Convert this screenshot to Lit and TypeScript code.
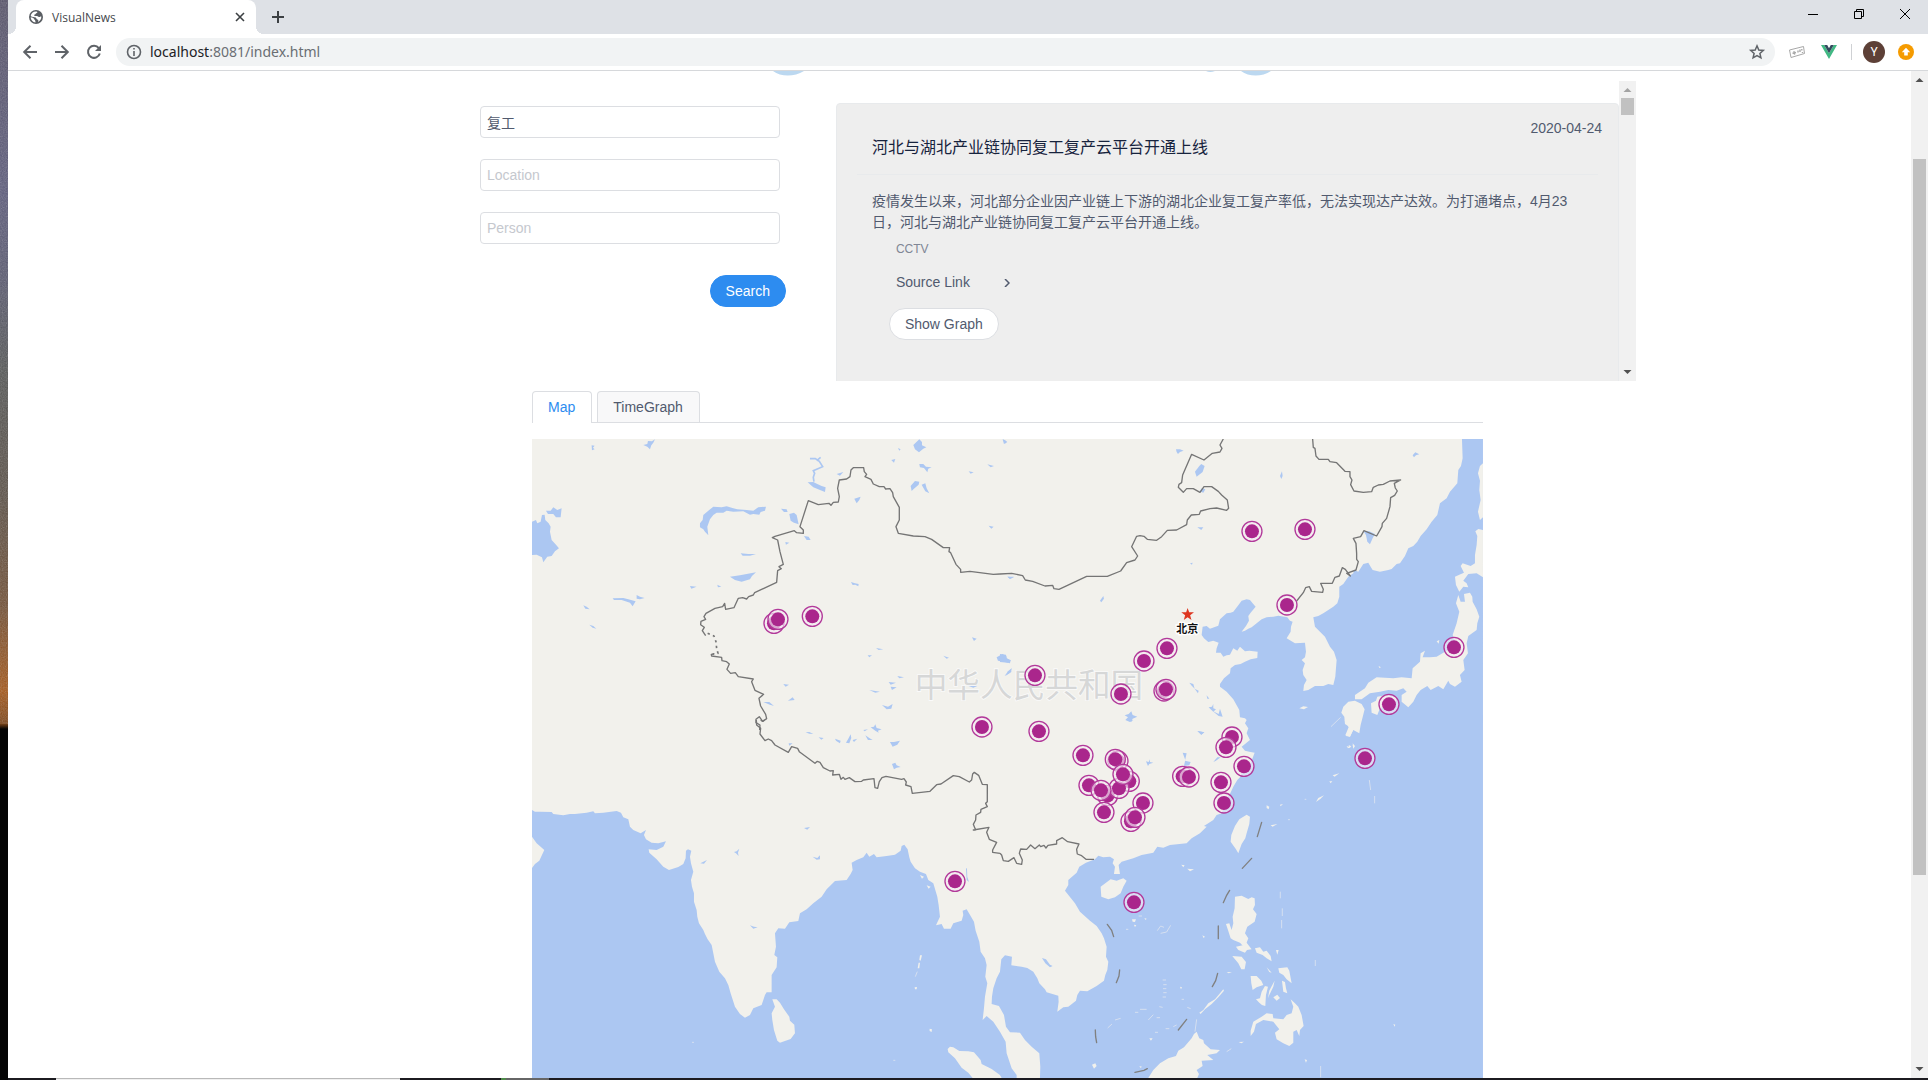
import { LitElement, html, svg, css } from "lit";
import { customElement, property, state } from "lit/decorators.js";

type Point = [number, number];

/* Map drawing units: three per pixel, origin at the top left of the map.
   The drawing is made of four sheets, each with its own origin. */
const SHEETS = {
  nw: { origin: [-36, -177] as Point },
  ne: { origin: [1404, -27] as Point },
  sw: { origin: [-36, 843] as Point },
  se: { origin: [1404, 843] as Point },
};
type SheetName = keyof typeof SHEETS;

const SEA: Record<SheetName, string[]> = {
  nw: [
    "M36,425 48,420 52,430 62,425 66,405 74,404 76,420 86,430 92,440 90,455 95,480 106,492 117,505 105,514 95,528 82,530 70,547 66,532 50,524 36,525Z",
    "M78,392 92,392 100,382 112,390 125,385 122,412 108,412 100,402 84,402Z",
    "M540,430 548,420 550,405 565,392 580,380 605,382 620,379 640,385 652,388 680,390 700,392 715,382 738,380 735,392 722,396 718,404 700,402 690,404 670,394 640,395 620,392 610,398 590,398 580,405 570,418 562,440 565,466 555,455 550,448 540,442Z",
    "M783,386 800,388 803,396 792,396Z",
    "M808,402 822,398 830,405 836,433 822,428 812,422Z",
    "M863,307 880,306 892,312 905,318 917,322 915,336 900,330 880,322Z",
    "M1180,195 1198,178 1206,186 1206,196 1219,202 1210,206 1197,217 1185,208Z",
    "M1198,252 1210,252 1218,260 1235,262 1225,266 1222,277 1212,264 1200,262Z",
    "M1172,318 1185,303 1198,305 1196,314 1182,326 1175,333Z",
    "M1205,314 1216,310 1220,325 1228,340 1216,334Z",
    "M370,195 382,192 384,183 396,184 405,178 400,188 394,196 390,208 382,200Z",
    "M630,590 660,586 680,582 708,577 696,588 690,598 665,605 645,600Z",
    "M662,520 685,522 708,522 690,527 668,527Z",
    "M278,655 310,654 325,658 347,664 338,679 330,668 305,660 282,660Z",
    "M350,645 360,650 374,654 360,658 350,656Z",
    "M1003,356 1022,350 1018,360 1010,370Z",
    "M993,606 1005,610 1016,612 1015,619 1006,614 998,615Z",
    "M190,676 200,680 209,688 196,686Z",
    "M208,734 220,738 229,746 218,743Z",
    "M1430,832 1448,822 1460,830 1458,836 1472,840 1470,850 1452,845 1434,842Z",
    "M1474,866 1474,876 1456,888 1466,876Z",
    "M1086,975 1104,980 1118,972 1114,986 1100,988Z",
    "M510,618 530,620 514,626Z",
    "M592,614 604,620 594,622Z",
    "M852,468 866,470 872,480 860,480Z",
    "M796,486 808,488 798,494Z",
    "M1406,437 1421,440 1414,446Z",
    "M1463,590 1482,592 1470,597Z",
    "M950,282 970,276 960,287Z",
    "M1450,178 1462,186 1454,192Z",
    "M1402,253 1422,258 1412,262Z",
    "M1346,274 1361,277 1352,281Z",
    "M1114,240 1126,237 1122,248Z",
    "M1134,204 1142,208 1138,212Z",
    "M215,196 224,197 219,203 224,208 216,211Z",
    "M1356,772 1370,776 1362,783Z",
    "M1068,804 1090,808 1076,810Z",
    "M1270,827 1287,833 1280,836Z",
    "M1043,826 1056,826 1048,832Z",
    "M1106,906 1128,908 1112,914Z",
    "M1112,920 1130,922 1116,930Z",
    "M1132,888 1152,892 1138,895Z",
    "M1048,930 1080,935 1066,938Z",
    "M730,966 748,966 762,978 746,973Z",
    "M804,962 818,952 824,960Z",
    "M790,912 807,914 797,920Z",
    "M1340,916 1372,918 1360,923Z",
  ],
  ne: [
    "M750,880 735,865 720,862 718,840 708,822 700,808 680,785 660,770 660,762 672,745 690,730 692,715 705,705 722,702 735,695 752,688 772,684 773,665 748,662 735,664 720,650 712,662 700,655 690,674 680,676 670,680 662,668 648,668 650,655 656,638 640,632 625,636 612,625 605,615 608,590 620,588 630,596 655,587 660,568 680,550 692,548 700,545 715,526 725,512 740,508 750,510 758,520 767,530 752,548 745,558 747,572 738,588 725,605 735,602 745,596 755,592 770,580 785,568 800,562 820,560 835,557 862,562 870,572 878,575 873,590 872,605 860,625 885,640 915,638 918,665 915,682 905,690 915,700 908,720 910,735 920,750 912,765 910,783 925,780 945,768 970,768 985,762 1000,765 1006,740 1010,690 1002,665 990,650 975,620 960,605 945,590 940,562 955,558 970,550 1000,530 1012,520 1018,500 1018,470 1030,462 1045,440 1060,430 1062,420 1075,425 1090,402 1105,398 1112,410 1118,420 1140,425 1165,420 1175,417 1190,402 1200,400 1215,378 1225,355 1240,348 1252,335 1262,318 1280,298 1295,275 1312,255 1320,220 1340,205 1350,185 1372,160 1375,120 1383,108 1388,85 1386,27 1449,27 1449,880Z",
    "M585,125 598,108 604,102 614,108 608,126 590,140Z",
    "M528,58 540,58 551,62 540,66 534,72 530,66Z",
    "M592,292 610,292 604,300Z",
    "M1090,303 1108,304 1125,312 1118,325 1110,343 1102,335 1098,315Z",
    "M300,512 310,498 312,506 304,517Z",
    "M374,856 386,852 394,844 398,855 412,860 398,866 394,876 386,870 376,870 384,862Z",
    "M626,832 636,830 640,822 640,835 648,838 640,845 632,838Z",
    "M638,843 656,852 660,836 668,860 656,858Z",
    "M568,758 580,762 584,776 574,766Z",
    "M584,776 596,782 594,790Z",
    "M620,796 628,806 622,806Z",
    "M0,672 18,674 20,684 33,692 24,698 0,696Z",
    "M36,714 30,728 14,738 24,724Z",
    "M592,903 613,907 604,914Z",
    "M840,138 846,124 848,138 844,147Z",
    "M1238,76 1246,67 1258,73 1248,76 1242,82Z",
    "M8,28 20,34 12,42Z",
    "M570,400 578,398 576,404Z",
    "M22,440 42,440 30,446Z",
    "M598,184 606,174 616,178 610,188Z",
  ],
  sw: [
    "M36,270 45,275 60,275 95,276 100,282 130,286 150,282 165,282 200,278 220,274 225,280 250,278 290,273 303,278 310,292 325,298 330,320 340,330 362,340 378,330 372,345 378,358 395,368 415,370 438,364 430,380 410,390 386,388 388,398 410,418 430,440 447,450 475,441 490,432 497,415 498,392 504,388 514,392 510,410 513,430 520,455 513,480 516,500 522,520 522,545 530,570 532,590 537,610 550,630 555,642 563,658 575,675 580,700 585,725 598,755 615,775 625,795 632,820 645,860 660,882 675,893 690,885 700,865 725,855 735,825 740,817 755,817 755,765 770,742 772,712 763,705 768,680 765,640 775,625 795,626 808,607 835,603 840,580 860,568 880,550 905,530 920,508 945,483 980,480 992,462 998,450 995,428 1010,420 1030,412 1040,398 1048,410 1062,402 1070,412 1100,408 1125,404 1142,392 1145,378 1153,374 1163,388 1168,412 1172,425 1185,445 1200,455 1218,462 1225,480 1240,490 1246,510 1252,530 1256,555 1260,590 1248,616 1265,612 1272,626 1292,626 1300,610 1325,602 1330,585 1328,572 1340,568 1352,588 1362,605 1367,632 1378,665 1382,695 1395,715 1400,735 1396,770 1402,790 1395,830 1392,865 1388,900 1400,888 1420,905 1440,935 1457,965 1460,1000 1475,1045 1490,1065 1490,1074 36,1074Z",
    "M857,37 868,36 880,42 868,41Z",
    "M896,52 911,54 904,59Z",
    "M945,56 962,62 960,70 948,62Z",
    "M978,68 985,56 992,43 994,54 988,70Z",
    "M998,60 1012,56 1002,66Z",
    "M1036,46 1048,54 1058,60 1044,60Z",
    "M1052,22 1062,20 1066,13 1070,24 1085,28 1074,32 1076,38 1066,32Z",
    "M1030,30 1044,28 1034,34Z",
    "M1110,66 1122,66 1140,62 1132,74 1118,80Z",
    "M1116,132 1126,128 1130,136 1142,141 1130,143 1122,148Z",
    "M806,70 818,70 808,77Z",
    "M852,324 870,321 862,329Z",
    "M541,430 561,420 552,431Z",
    "M642,396 650,394 658,386 654,398 656,408 648,400Z",
    "M878,410 892,414 900,406 900,418 890,419Z",
    "M690,616 702,620 713,622 700,626Z",
    "M1338,444 1341,446 1342,470 1347,486 1340,480Z",
  ],
  se: [
    "M120,1074 121,1040 118,1000 95,980 75,960 60,938 30,937 18,920 12,885 -3,858 -25,852 -24,830 -20,805 -10,775 0,755 4,718 15,706 36,710 34,736 65,740 82,744 100,755 112,775 118,790 135,808 140,817 175,827 176,845 172,875 190,862 205,860 228,842 232,825 240,812 262,814 290,798 312,782 316,765 322,750 325,725 318,710 320,680 312,655 305,640 290,618 270,602 240,575 225,550 195,512 205,495 205,480 230,458 238,440 258,428 285,418 295,407 310,412 330,410 342,418 338,430 345,440 342,462 360,462 356,435 365,425 400,415 425,405 460,398 472,380 490,383 510,375 560,370 575,355 600,340 620,320 612,318 640,300 650,285 665,280 672,262 680,235 690,222 700,200 712,180 720,172 728,150 745,150 752,130 764,98 748,95 735,92 725,80 750,60 740,40 745,25 735,10 748,-15 1449,-15 1449,1074Z",
    "M548,98 560,100 555,122 572,126 568,136 552,138 556,120Z",
    "M438,124 446,126 450,118 450,126 460,128 448,132 444,138Z",
    "M640,126 652,112 662,112 648,122Z",
    "M126,714 138,718 150,734 158,738 150,742 136,730Z",
    "M376,0 400,0 390,6Z",
    "M593,33 613,37 604,44Z",
  ],
};

const ISLANDS: Record<SheetName, string[]> = {
  nw: [],
  ne: [
    "M1449,100 1440,108 1434,130 1440,152 1438,180 1442,210 1434,245 1440,270 1449,262Z",
    "M1449,300 1435,297 1426,304 1432,318 1430,345 1425,375 1425,400 1412,408 1388,400 1382,408 1392,428 1378,434 1365,440 1368,465 1378,485 1390,470 1405,472 1400,460 1390,452 1405,432 1430,430 1449,442Z",
    "M1375,495 1382,515 1395,515 1392,492 1410,488 1417,500 1418,515 1430,538 1438,560 1432,580 1430,600 1405,618 1400,640 1404,670 1390,690 1394,720 1380,735 1385,755 1365,770 1350,762 1345,752 1330,778 1315,768 1292,780 1282,768 1262,780 1250,795 1240,815 1225,832 1205,815 1205,795 1220,785 1210,775 1190,782 1165,780 1140,785 1110,790 1085,808 1065,808 1065,795 1095,775 1105,758 1130,742 1180,745 1205,742 1235,745 1238,715 1260,695 1262,670 1275,662 1268,682 1290,682 1310,680 1335,665 1352,655 1368,640 1358,615 1370,580 1378,545 1368,520Z",
    "M1113,820 1128,812 1132,800 1160,795 1180,800 1192,800 1186,818 1165,828 1140,835 1132,855 1115,848Z",
    "M1030,830 1045,815 1065,812 1085,822 1094,838 1088,862 1082,885 1078,910 1060,900 1050,920 1038,918 1048,890 1035,882 1033,860 1024,848Z",
    "M898,835 910,829 924,831 912,838Z",
    "M1310,634 1318,630 1316,641Z",
    "M1040,948 1052,952 1044,955Z",
    "M1058,944 1064,950 1060,956Z",
    "M1136,708 1143,712 1138,714Z",
  ],
  sw: [
    "M36,350 50,370 62,380 73,390 66,405 58,422 45,432 36,444Z",
    "M757,838 770,838 780,848 792,868 808,890 810,902 823,914 825,940 812,957 780,968 772,962 762,930 757,900 755,880 765,860Z",
    "M1283,987 1290,980 1300,982 1318,993 1345,994 1362,997 1382,1020 1385,1032 1415,1047 1440,1065 1445,1074 1358,1074 1345,1058 1325,1043 1305,1015 1285,997Z",
    "M1184,802 1191,801 1190,808 1185,808Z",
    "M1229,926 1236,928 1235,936 1229,933Z",
    "M1200,706 1206,706 1202,722 1198,720Z",
    "M1196,728 1200,728 1198,745 1193,745Z",
    "M1220,496 1232,500 1226,506Z",
    "M1200,465 1212,470 1206,476Z",
  ],
  se: [
    "M740,284 750,290 748,312 740,340 736,355 725,372 715,400 708,388 692,365 694,345 705,318 718,298Z",
    "M302,500 318,488 332,478 350,482 370,475 380,482 370,500 362,520 345,532 325,538 304,530Z",
    "M705,530 725,527 745,537 755,532 764,535 765,555 759,568 770,582 764,605 742,620 735,640 745,655 740,668 755,688 740,690 720,668 700,660 692,655 684,630 678,612 688,610 695,630 700,610 698,590 704,565Z",
    "M708,680 728,676 745,685 735,698 715,690Z",
    "M697,708 725,710 738,726 734,748 724,748 715,730Z",
    "M765,685 780,682 790,695 800,692 812,708 815,724 800,715 788,705 770,698Z",
    "M828,690 836,690 832,704Z",
    "M752,768 770,768 784,782 790,795 770,802 758,810 754,790Z",
    "M835,745 862,742 868,752 875,790 860,778 850,765 838,758Z",
    "M846,782 855,786 858,805 862,820 850,815Z",
    "M768,838 780,835 785,815 795,798 804,800 798,825 796,858 786,855 778,848Z",
    "M824,782 820,800 808,825 804,835 808,812Z",
    "M820,832 832,824 840,834 830,842Z",
    "M800,742 815,758 808,756Z",
    "M872,838 885,850 895,860 905,885 911,918 900,930 898,948 890,930 880,935 880,968 868,978 850,970 830,958 825,938 838,928 820,905 790,900 768,912 762,935 752,948 752,932 760,905 785,890 800,880 818,882 820,895 850,898 860,885 875,880 880,860Z",
    "M598,878 610,870 625,850 645,838 660,820 670,808 672,812 655,832 635,852 615,868 602,882Z",
    "M445,1074 460,1050 480,1030 505,1015 528,1008 535,992 552,982 575,955 582,942 590,935 598,955 610,960 612,970 632,988 660,990 650,1000 622,1005 640,1020 605,1022 608,1038 590,1050 597,1062 592,1074Z",
    "M800,256 808,260 806,268 800,264Z",
    "M840,254 849,252 842,259Z",
    "M812,316 832,312 818,320Z",
    "M948,246 955,234 972,226 962,236Z",
    "M988,184 997,184 992,190Z",
    "M998,166 1018,160 1004,170Z",
    "M562,446 582,448 570,454Z",
    "M544,434 554,436 550,442Z",
    "M396,598 408,598 405,606 398,605Z",
    "M402,614 409,616 405,621Z",
    "M433,594 440,596 437,600Z",
    "M607,646 615,650 611,654Z",
    "M276,1034 286,1030 290,1038 282,1046Z",
    "M448,955 458,955 453,962Z",
    "M716,966 732,965 724,970Z",
    "M914,1018 921,1020 918,1028Z",
    "M1180,912 1186,914 1184,920Z",
    "M418,1038 426,1040 422,1044Z",
    "M680,756 696,757 686,760Z",
    "M540,800 546,802 543,808Z",
    "M1046,75 1054,79 1048,84Z",
    "M1058,70 1065,78 1060,84Z",
    "M1034,0 1082,0 1076,32 1060,28 1050,50 1036,46 1046,22Z",
  ],
};

const SHOALS: Record<SheetName, string[]> = {
  nw: [], ne: ["M993,890 1022,862"],
  sw: ["M1186,770 1192,755", "M1120,1021 1126,1021", "M516,967 522,967"],
  se: [
    "M841,515V535", "M847,565V588", "M845,600V625", "M946,720V738", "M962,1038V1072", "M1108,180 1112,210", "M1124,228V250",
    "M472,632 482,618 492,622", "M482,640 500,636 512,616", "M488,780H498", "M490,794H500", "M489,806H499", "M490,818H500", "M488,831H498",
    "M405,877H415", "M420,868H440", "M445,900 460,884", "M323,924 336,912", "M345,900 362,895", "M478,860 488,862", "M545,838H552", "M562,862 572,866",
    "M465,937H474", "M497,926H508", "M378,628H385", "M416,588H426", "M590,898 585,935", "M680,995 694,986", "M914,238H919", "M864,299H870", "M470,893H480", "M520,920 530,915",
  ],
};

const BORDERS: Record<SheetName, string[]> = {
  nw: [
    "M719,1050 720,1035 708,1028 708,1018 718,1010 728,1024 740,1016 737,1003 722,978 717,955 731,943 705,931 695,905 700,897 655,890 646,878 632,880 621,868 628,852 620,845 606,842 605,832 575,828 574,823 582,822",
    "M557,767 547,752 553,742 542,734 543,724 557,718 552,710 558,700 585,685 608,680 614,670 617,688 642,683 655,655 668,653 680,657 686,650 700,645 704,638 770,607 773,572 784,566 777,560 790,553 780,515 773,480 757,473 765,469 823,452 830,458 850,460 850,450 840,440 865,362 895,374 927,370 933,376 940,367 955,366 958,350 953,325 958,300 980,297 990,290 993,270 1000,263 1031,263 1033,275 1040,283 1035,290 1053,298 1060,312 1078,320 1092,320 1097,327 1110,326 1118,338 1120,350 1138,382 1138,420 1128,440 1135,460 1180,468 1215,470 1235,478 1270,503 1289,503 1287,515 1292,518 1308,553 1322,568 1322,577 1350,574 1420,583 1440,582",
  ],
  ne: [
    "M0,432 35,430 68,437 76,450 98,454 135,468 158,466 162,476 177,478 260,439 322,439 362,423 380,398 405,390 413,378 395,350 410,319 420,317 432,319 442,328 470,331 485,320 502,301 530,300 560,284 562,270 574,255 598,253 602,243 630,236 650,234 680,241 686,235 682,210 665,195 655,184 635,170 612,170 600,187 580,176 560,176 550,187 535,172 537,163 545,158 548,135 575,73 612,90 637,70 660,66 666,55 660,45 670,27",
    "M938,27 940,52 945,55 948,78 957,88 985,88 990,95 1010,98 1035,124 1050,125 1050,140 1056,150 1052,164 1062,183 1090,187 1115,185 1120,172 1135,165 1150,163 1170,153 1202,150 1183,160 1186,174 1192,183 1184,196 1172,203 1170,230 1160,265 1147,280 1146,290 1130,318 1092,302 1082,320 1060,325 1068,340 1070,370 1070,388 1075,395 1068,420 1040,430 1051,438 1036,418 1027,413 1018,438 1005,442 997,460 962,460 970,478 968,487 935,484 928,470 917,473 910,488 890,513",
  ],
  sw: [
    "M709,0 710,15 722,25 720,42 735,62 745,57 755,62 765,75 805,97 815,80 833,85 838,95 885,130 892,124 900,127 910,143 930,153 940,152 938,165 958,163 963,178 970,172 975,178 988,173 1005,185 1025,184 1030,180 1062,176 1065,203 1073,205 1078,185 1086,173 1098,169 1145,178 1152,176 1159,186 1157,195 1173,200 1177,220 1230,214 1250,194 1263,192 1300,167 1318,170 1348,186 1355,180 1358,162 1363,157 1376,166 1387,193 1402,194 1402,245 1397,250 1402,260 1383,268 1382,277 1368,285 1367,300 1360,313 1367,330 1360,330 1407,322 1400,337 1408,358 1430,367 1418,390 1418,397 1440,400",
    "M722,0 728,4 734,0",
  ],
  se: [
    "M0,400 5,405 10,422 25,424 42,413 50,430 65,433 67,420 58,400 62,387 80,388 92,375 105,386 118,375 122,380 132,376 138,384 144,376 170,372 170,362 187,353 203,365 237,372 230,388 232,402 245,407 258,418 282,418",
  ],
};

const DASHES = [
  "M785,307 772,350", "M755,415 727,445", "M689,511 680,526 670,548", "M655,618V656", "M653,760 647,782 637,800",
  "M560,898 535,930", "M442,1046 432,1051 405,1057", "M286,930 287,950 290,968", "M359,750 357,768 349,788", "M322,613 335,631 341,650",
];

const EVENTS: [SheetName, Point[]][] = [
  ["nw", [[761, 729], [773, 717], [876, 708]]],
  ["ne", [[755, 303], [914, 297], [860, 524], [1361, 651], [1166, 822], [1094, 984], [500, 654], [431, 692], [362, 791], [491, 782], [497, 777], [104, 735]]],
  ["sw", [[1385, 20], [1304, 483]]],
  ["se", [
    [116, 33], [248, 105], [353, 122], [345, 117], [387, 183], [322, 226], [356, 204], [368, 162], [266, 195], [302, 210], [311, 276],
    [392, 303], [428, 248], [404, 291], [547, 168], [566, 170], [695, 50], [677, 81], [731, 138], [662, 186], [671, 248], [401, 546],
  ]],
];

const move = (name: SheetName) => `translate(${SHEETS[name].origin.join(" ")})`;
const names = Object.keys(SHEETS) as SheetName[];

@customElement("news-map")
class NewsMap extends LitElement {
  static styles = css`
    :host { display: block; min-height: 0; background: #f2f1ec; overflow: hidden; }
    svg { display: block; width: 100%; height: 100%; }
    .sea { fill: #acc7f2; }
    .land { fill: #f2f1ec; }
    .shoal { fill: none; stroke: #d5dff0; stroke-width: 3; }
    .river { fill: none; stroke: #acc7f2; stroke-width: 5; }
    .border { fill: none; stroke: #757575; stroke-width: 4; stroke-linejoin: round; }
    .dotted { stroke-width: 5; stroke-dasharray: 7 10; }
    .dash { fill: none; stroke: #808080; stroke-width: 4; stroke-linecap: round; }
    .ring { fill: #f5e9f3; fill-opacity: .65; stroke: #b2399a; stroke-width: 4; }
    .dot { fill: #aa268c; }
    .country { font: 98px "Noto Sans CJK SC", sans-serif; fill: #d6d7d7; stroke: #fafafa; stroke-width: 5; paint-order: stroke; text-anchor: middle; }
    .capital { font: bold 33px "Noto Sans CJK SC", sans-serif; fill: #111; stroke: #fff; stroke-width: 8; paint-order: stroke; text-anchor: middle; }
    .star { fill: #de3620; }
  `;

  render() {
    return html`<svg viewBox="0 0 2853 1917" preserveAspectRatio="xMidYMin slice" role="img" aria-label="Map">
      ${names.map((n) => svg`<g transform=${move(n)}>${SEA[n].map((d) => svg`<path class="sea" d=${d}></path>`)}</g>`)}
      ${names.map((n) => svg`<g transform=${move(n)}>
        ${ISLANDS[n].map((d) => svg`<path class="land" d=${d}></path>`)}
        ${SHOALS[n].map((d) => svg`<path class="shoal" d=${d}></path>`)}
      </g>`)}
      <g transform=${move("nw")}>
        <path class="river" d="M882,305 880,292 884,280 880,272 908,260 898,244 886,236 870,236M890,242 902,232"></path>
      </g>
      <text class="country" x="1491" y="773">中华人民共和国</text>
      ${names.map((n) => svg`<g transform=${move(n)}>${BORDERS[n].map((d) => svg`<path class="border" d=${d}></path>`)}</g>`)}
      <g transform=${move("nw")}><path class="border dotted" d="M563,760 582,768 588,785 590,805 594,820 578,822"></path></g>
      <g transform=${move("se")}>${DASHES.map((d) => svg`<path class="dash" d=${d}></path>`)}</g>
      <path class="star" d="M1967,507 1971.500,520 1986,520 1974.500,529 1978.500,543 1967,535 1955.500,543 1959.500,529 1948,520 1962.500,520Z"></path>
      <text class="capital" x="1966" y="581">北京</text>
      ${EVENTS.map(([n, points]) => svg`<g transform=${move(n)}>${points.map(([x, y]) => svg`
        <circle class="ring" cx=${x + 1} cy=${y + 1} r="30"></circle><circle class="dot" cx=${x + 1} cy=${y + 1} r="21"></circle>`)}</g>`)}
    </svg>`;
  }
}

@customElement("scroll-rail")
class ScrollRail extends LitElement {
  @property({ type: Number }) start = 0;
  @property({ type: Number }) size = 10;
  @property({ type: Boolean }) top = false;

  static styles = css`
    :host { display: grid; grid-template-rows: 17px 1fr 17px; width: 17px; flex: none; background: #f1f1f1; }
    svg { display: block; width: 17px; height: 17px; fill: #505050; }
    .faded { fill: #a3a3a3; }
    .track { display: flex; flex-direction: column; min-height: 0; padding: 0 2px; }
    .thumb { background: #c1c1c1; }
  `;

  render() {
    return html`
      <svg class=${this.top ? "faded" : ""} viewBox="0 0 17 17"><path d="M8.500 7 12.500 11H4.500Z"></path></svg>
      <div class="track">
        <div style="height:${this.start}%"></div>
        <div class="thumb" style="height:${this.size}%"></div>
      </div>
      <svg viewBox="0 0 17 17"><path d="M4.500 6H12.500L8.500 10Z"></path></svg>`;
  }
}

@customElement("browser-bar")
class BrowserBar extends LitElement {
  static styles = css`
    :host { display: block; flex: none; font-family: "Open Sans", sans-serif; border-bottom: 1px solid #d6d8db; }
    button { border: 0; padding: 0; background: none; display: grid; place-items: center; flex: none; }
    svg { display: block; overflow: visible; fill: none; }
    .strip { display: flex; align-items: stretch; height: 34px; background: #dee1e6; padding-left: 8px; }
    .tab { position: relative; display: flex; align-items: center; width: 240px; box-sizing: border-box; padding: 0 8px 0 13px; background: #fff; border-radius: 8px 8px 0 0; font-size: 12px; color: #45484d; }
    .tab::before, .tab::after { content: ""; position: absolute; bottom: 0; width: 8px; height: 8px; }
    .tab::before { right: 100%; background: radial-gradient(circle at 0 0, transparent 8px, #fff 8px); }
    .tab::after { left: 100%; background: radial-gradient(circle at 100% 0, transparent 8px, #fff 8px); }
    .name { flex: 1; padding-left: 9px; }
    .close { width: 16px; height: 16px; }
    .plus { width: 28px; margin-left: 8px; }
    .grow { flex: 1; }
    .win { width: 46px; height: 28px; }
    .tools { display: flex; align-items: center; height: 36px; background: #fff; }
    .nav { width: 32px; height: 32px; }
    .back { margin-left: 6px; }
    .omni { flex: 1; display: flex; align-items: center; height: 28px; margin-left: 6px; border-radius: 14px; background: #f1f3f4; padding: 0 10px; }
    .url { flex: 1; min-width: 0; margin-left: 8px; padding-bottom: 2px; font: 14px "Noto Sans", sans-serif; color: #6a6e73; }
    .url b { font-weight: 400; color: #202124; }
    .ext { width: 32px; height: 28px; margin-left: 6px; }
    .vue { margin-left: 0; }
    .rule { width: 1px; height: 16px; background: #cfd1d4; margin: 0 11px 0 6px; }
    .face { width: 22px; height: 22px; border-radius: 50%; background: #5d4037; color: #fff; font: 12px Roboto, sans-serif; }
    .update { width: 16px; height: 16px; border-radius: 50%; background: #f59b00; margin: 0 14px 0 13px; }
  `;

  render() {
    return html`
      <div class="strip">
        <div class="tab">
          <svg width="14" height="14" viewBox="0 0 14 14"><circle cx="7" cy="7" r="7" fill="#5a5e63"></circle>
            <path fill="#fff" d="M7.500 1.600C9 2 8.500 3 7.300 3.300 6.500 3.600 6.800 4.500 5.800 4.600 4.800 4.800 5 6 6 6H8C9 6 9 7 10 7 11 7 11.500 6.300 12.300 6.500 12.600 9 11 11 9 11.900 9.500 10.500 9.600 9.700 8.300 9.400 7 9.200 7.700 8 6.700 7.600 5.500 7.200 3 7.200 1.700 6 2 3.500 4.500 1.300 7.500 1.600Z"></path>
            <path fill="#fff" d="M1.700 7.300C3.200 7.600 4.700 8 5 9 5.300 10 6.600 9.800 6.500 12.400 4 12.300 1.800 10.200 1.700 7.300Z"></path></svg>
          <span class="name">VisualNews</span>
          <button class="close" aria-label="Close tab"><svg width="8" height="8" stroke="#3c4043" stroke-width="1.600"><path d="M0 0 8 8M8 0 0 8"></path></svg></button>
        </div>
        <button class="plus" aria-label="New tab"><svg width="12" height="12" stroke="#3c4043" stroke-width="2"><path d="M6 0V12M0 6H12"></path></svg></button>
        <span class="grow"></span>
        <button class="win" aria-label="Minimize"><svg width="10" height="10" stroke="#000"><path d="M0 5.500H10"></path></svg></button>
        <button class="win" aria-label="Restore"><svg width="10" height="10" stroke="#000"><path d="M.500 2.500H7.500V9.500H.500ZM2.500 2.500V.500H9.500V7.500H7.500"></path></svg></button>
        <button class="win" aria-label="Close"><svg width="10" height="10" stroke="#000"><path d="M0 0 10 10M10 0 0 10"></path></svg></button>
      </div>
      <div class="tools">
        <button class="nav back" aria-label="Back"><svg width="14" height="14" stroke="#5f6368" stroke-width="2"><path d="M14 7H1M7.500 .700 1.200 7 7.500 13.300"></path></svg></button>
        <button class="nav" aria-label="Forward"><svg width="14" height="14" stroke="#5f6368" stroke-width="2"><path d="M0 7H13M6.500 .700 12.800 7 6.500 13.300"></path></svg></button>
        <button class="nav" aria-label="Reload"><svg width="14" height="14" stroke="#5f6368" stroke-width="2"><path d="M11.800 3.200A6 6 0 1 0 12.800 8.500"></path><path fill="#5f6368" stroke="none" d="M14 0V6H8Z"></path></svg></button>
        <div class="omni">
          <svg width="16" height="16" stroke="#5f6368" stroke-width="1.600"><circle cx="8" cy="8" r="6.500"></circle><path d="M8 7V12M8 4V5.600"></path></svg>
          <span class="url"><b>localhost</b>:8081/index.html</span>
          <svg width="16" height="16" stroke="#5f6368" stroke-width="1.500"><path d="M8 1.800 9.800 6 14.300 6.400 10.900 9.400 11.900 13.800 8 11.500 4.100 13.800 5.100 9.400 1.700 6.400 6.200 6Z"></path></svg>
        </div>
        <button class="ext" aria-label="Game pad"><svg width="16" height="12" viewBox="0 0 16 12" stroke="#a8a8a8"><path d="M.500 4 14.500 .500 15.500 7.500 2 11.500Z"></path><path stroke-width="1.400" d="M3.500 7.300 7 6.500M4.900 5.200 5.600 8.600M9 4.500V6.500M11 3.500V6M12.800 3V4.500M13.500 6V7"></path></svg></button>
        <button class="ext vue" aria-label="Vue devtools"><svg width="16" height="14" viewBox="0 0 16 14"><path fill="#41b883" d="M0 0H3.200L8 8.300 12.800 0H16L8 14Z"></path><path fill="#34495e" d="M3.200 0H6.200L8 3.200 9.800 0H12.800L8 8.300Z"></path></svg></button>
        <span class="rule"></span>
        <button class="face" aria-label="Profile">Y</button>
        <button class="update" aria-label="Update"><svg width="16" height="16"><path fill="#fff" d="M8 3.800 12.200 8.200H9.800V11.500H6.200V8.200H3.800Z"></path></svg></button>
      </div>`;
  }
}

@customElement("app-root")
class AppRoot extends LitElement {
  @state() private keyword = "复工";
  @state() private tab = "Map";

  static styles = css`
    :host { display: grid; grid-template: 1fr 2px / 8px 1fr; height: 100vh; overflow: hidden; background: #fff; color: #515a6e;
      font: 14px/21px "Liberation Sans", "Noto Sans CJK SC", sans-serif; }
    .desk { grid-row: 1 / 3; background: linear-gradient(#57536a, #5d5c7c 18%, #5a5a70 26%, #555757 34%, #5c5147 46%, #725035 56%, #a65718 64%, #7d4518 67%, #050505 67.500%); overflow: hidden; }
    .grain { display: block; width: 100%; height: 67%; opacity: .35; }
    .window { display: flex; flex-direction: column; min-width: 0; min-height: 0; }
    .view { flex: 1; display: flex; min-height: 0; }
    .page { flex: 1; display: flex; flex-direction: column; min-width: 0; }
    .banner { display: block; flex: none; width: 100%; height: 10px; fill: #bcd8f0; }
    .top { display: grid; grid-template-columns: 306fr 50fr 800fr; flex: none; height: 300px; margin-bottom: 10px; padding: 0 14.450% 0 24.800%; }
    .form { display: flex; flex-direction: column; align-items: flex-start; padding-top: 25px; }
    .field { box-sizing: border-box; width: 98%; height: 32px; margin-bottom: 21px; border: 1px solid #dcdee2; border-radius: 4px; padding: 4px 6px; background: #fff; font: inherit; color: #515a6e; }
    .field::placeholder { color: #c5c8ce; opacity: 1; }
    .pill { height: 32px; border: 1px solid #dcdee2; border-radius: 16px; padding: 0 15px; background: #fff; font: inherit; color: #515a6e; }
    .go { align-self: flex-end; margin-top: 10px; background: #2d8cf0; border-color: #2d8cf0; color: #fff; }
    .news { grid-column: 3; display: flex; min-height: 0; }
    .scroller { flex: 1; min-width: 0; padding-top: 22px; overflow: hidden; }
    .card { position: relative; min-height: 320px; border: 1px solid #e8eaec; border-radius: 4px; background: #eee; padding: 16px 20px; box-sizing: border-box; }
    .date { position: absolute; top: 14px; right: 16px; }
    .title { margin: 0; padding: 16px 15px 14px; border-bottom: 1px solid #e8eaec; font-size: 16px; line-height: 24px; font-weight: 400; color: #17233d; }
    .body { margin: 0; padding: 16px 15px 0; }
    .source { margin: 6px 0 0 39px; font-size: 12px; color: #808695; }
    .link { display: flex; align-items: center; gap: 34px; width: max-content; margin: 12px 0 15px 39px; color: #515a6e; text-decoration: none; }
    .link svg { fill: none; stroke: #515a6e; stroke-width: 1.500; }
    .graph { margin-left: 32px; }
    .lower { flex: 1; display: flex; flex-direction: column; min-height: 0; margin: 0 22.490% 0 27.540%; }
    .tabs { display: flex; gap: 5px; flex: none; height: 32px; box-sizing: border-box; border-bottom: 1px solid #dcdee2; margin-bottom: 16px; }
    .tab { box-sizing: border-box; height: 31px; border: 1px solid #dcdee2; border-bottom: 0; border-radius: 4px 4px 0 0; padding: 0 16px 0 15px; background: #f8f8f9; font: inherit; color: #515a6e; }
    .tab[aria-selected="true"] { height: 32px; background: #fff; color: #2d8cf0; }
    news-map { flex: 1; }
    .task { display: flex; background: #1c1b20; }
    .task span { height: 2px; }
    .gap { width: 48px; }
    .find { width: 344px; background: linear-gradient(#b9b9b9 50%, #f0f0f0 50%); }
    .gap2 { width: 101px; }
    .green { width: 5px; background: #4f8a4a; }
    .open { width: 43px; background: #666; }
  `;

  private tabButton(name: string) {
    return html`<button class="tab" role="tab" aria-selected=${String(this.tab === name)} @click=${() => (this.tab = name)}>${name}</button>`;
  }

  render() {
    return html`
      <div class="desk">
        <svg class="grain"><filter id="grain"><feTurbulence type="fractalNoise" baseFrequency="0.8" numOctaves="2"></feTurbulence><feColorMatrix type="saturate" values="0"></feColorMatrix></filter><rect width="100%" height="100%" filter="url(#grain)"></rect></svg>
      </div>
      <div class="window">
        <browser-bar></browser-bar>
        <div class="view">
          <main class="page">
            <svg class="banner" viewBox="0 0 1903 10" preserveAspectRatio="xMidYMin slice">
              <path d="M765 0C773 6 786 6 796 0ZM1198 0Q1202 2 1207 0ZM1233 0C1241 6 1254 6 1263 0Z"></path>
            </svg>
            <section class="top">
              <form class="form" @submit=${(e: Event) => e.preventDefault()}>
                <input class="field" aria-label="Keyword" .value=${this.keyword} @input=${(e: Event) => (this.keyword = (e.target as HTMLInputElement).value)}>
                <input class="field" aria-label="Location" placeholder="Location">
                <input class="field" aria-label="Person" placeholder="Person">
                <button class="pill go">Search</button>
              </form>
              <div class="news">
                <div class="scroller">
                  <article class="card">
                    <time class="date">2020-04-24</time>
                    <h2 class="title">河北与湖北产业链协同复工复产云平台开通上线</h2>
                    <p class="body">疫情发生以来，河北部分企业因产业链上下游的湖北企业复工复产率低，无法实现达产达效。为打通堵点，4月23日，河北与湖北产业链协同复工复产云平台开通上线。</p>
                    <div class="source">CCTV</div>
                    <a class="link" href="#">Source Link <svg width="6" height="8"><path d="M1 0 5 4 1 8"></path></svg></a>
                    <button class="pill graph">Show Graph</button>
                  </article>
                </div>
                <scroll-rail top .start=${0} .size=${6.4}></scroll-rail>
              </div>
            </section>
            <section class="lower">
              <div class="tabs" role="tablist">${this.tabButton("Map")}${this.tabButton("TimeGraph")}</div>
              <news-map></news-map>
            </section>
          </main>
          <scroll-rail .start=${7.3} .size=${73.6}></scroll-rail>
        </div>
      </div>
      <div class="task"><span class="gap"></span><span class="find"></span><span class="gap2"></span><span class="green"></span><span class="open"></span></div>`;
  }
}
